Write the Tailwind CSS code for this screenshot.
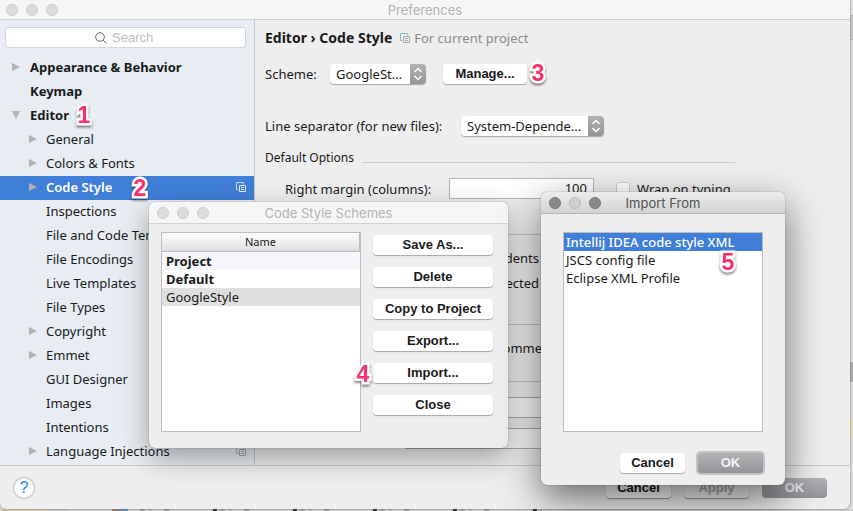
<!DOCTYPE html>
<html lang="en">
<head>
<meta charset="utf-8">
<title>Preferences</title>
<script src="https://cdn.jsdelivr.net/npm/@tailwindcss/browser@4"></script>
</head>
<body class="relative flex h-screen flex-col overflow-hidden bg-[#e2e2e2] font-['Noto_Sans',sans-serif] text-[13px] leading-5 text-[#1a1a1a]">
<svg class="hidden">
  <symbol id="copy" viewBox="0 0 10 10"><path d="M2.5 7.5h-2v-7h7v2" fill="none" stroke="var(--back,#8fb9cc)"/><path d="M3.500 3.500h6v6h-6zM5 5.500h3M5 7.500h3" fill="none" stroke="var(--front,#a3a7aa)"/></symbol>
  <symbol id="right" viewBox="0 0 8 10"><path d="M0 1v8l8-4z" fill="#b2b2b2"/></symbol>
  <symbol id="down" viewBox="0 0 10 8"><path d="M1 0h8L5 8z" fill="#b2b2b2"/></symbol>
  <symbol id="updown" viewBox="0 0 10 14"><path d="M1.500 5 5 1.500 8.500 5M1.500 9 5 12.500 8.500 9" fill="none" stroke="#fff" stroke-width="1.500"/></symbol>
</svg>

<!-- editor window behind the preferences -->
<div class="absolute inset-y-0 right-0 w-2 overflow-hidden bg-[#dedede]">
  <div class="h-4 border-b border-[#c0c0c0] bg-[#e4e4e4]"></div>
  <div class="h-6 border-b border-[#b5b5b5] bg-[#cacaca]"></div>
  <div class="mt-[322px] h-5 bg-[#b0b0b0]"></div>
  <div class="mt-9 h-5 bg-[#dedfb8]"></div>
</div>
<div class="absolute inset-x-0 bottom-0 flex h-[2px] bg-[#cfcfcf]">
  <div class="w-12 bg-[#cfcbb4]"></div><div class="w-5 bg-[#c5c5c5]"></div><div class="w-11"></div>
  <div class="w-2 bg-[#a08370]"></div><div class="w-2 bg-[#6a93b5]"></div>
  <div class="ml-3 w-[402px] bg-[repeating-linear-gradient(90deg,#aaa_0_5px,#cfcfcf_5px_9px,#b4b4b4_9px_12px,#cfcfcf_12px_24px,#aaa_24px_30px,#cfcfcf_30px_73px,#333_73px_77px,#cfcfcf_77px_80px)]"></div>
</div>

<main class="relative mr-[3px] mb-[2px] flex min-h-0 flex-1 flex-col overflow-hidden rounded-b-md bg-[#eee] shadow-[0_0_2px_rgba(0,0,0,.6)]">
  <header class="relative flex h-5 shrink-0 items-center justify-center border-b border-[#d2d2d2] bg-[#f6f6f6]">
    <div class="absolute left-[6px] flex gap-2"><i class="size-3 rounded-full border border-[#cdcdcd] bg-[#dcdcdc]"></i><i class="size-3 rounded-full border border-[#cdcdcd] bg-[#dcdcdc]"></i><i class="size-3 rounded-full border border-[#cdcdcd] bg-[#dcdcdc]"></i></div>
    <h1 class="font-[Inter,sans-serif] text-[#b3b3b3]">Preferences</h1>
  </header>

  <div class="flex min-h-0 flex-1">
    <aside class="flex w-[255px] shrink-0 flex-col border-r border-[#c4c6c8] bg-[#e7edf2]">
      <label class="mt-[7px] mr-2 mb-2 ml-[5px] flex h-[21px] items-center justify-center gap-[5px] rounded-[3px] border border-[#d3d7da] bg-white">
        <svg class="size-3" viewBox="0 0 12 12" fill="none" stroke="#666"><circle cx="5" cy="5" r="4.300"/><path d="m8 8 3.500 3.500"/></svg>
        <input type="text" aria-label="Search" placeholder="Search" class="w-[44px] font-['Liberation_Sans',sans-serif] text-[13px] outline-none placeholder:text-[#bdbdbd]">
      </label>
      <ul class="[&>li]:flex [&>li]:h-6 [&>li]:items-center [&>li]:pr-2 [&>li]:pb-[2px]">
        <li class="pl-3 font-bold"><svg class="mr-[10px] h-[10px] w-2"><use href="#right"/></svg>Appearance &amp; Behavior</li>
        <li class="pl-[30px] font-bold">Keymap</li>
        <li class="pl-[11px] font-bold"><svg class="mr-[9px] h-2 w-[10px]"><use href="#down"/></svg>Editor</li>
        <li class="pl-[29px]"><svg class="mr-[9px] h-[10px] w-2"><use href="#right"/></svg>General</li>
        <li class="pl-[29px]"><svg class="mr-[9px] h-[10px] w-2"><use href="#right"/></svg>Colors &amp; Fonts</li>
        <li class="bg-[#3f7ed9] pl-[29px] font-semibold text-white"><svg class="mr-[9px] h-[10px] w-2"><use href="#right"/></svg>Code Style<svg class="ml-auto size-[10px] [--back:#c4d8f4] [--front:#e0eafa]"><use href="#copy"/></svg></li>
        <li class="pl-[46px]">Inspections</li>
        <li class="pl-[46px]">File and Code Templates</li>
        <li class="pl-[46px]">File Encodings</li>
        <li class="pl-[46px]">Live Templates</li>
        <li class="pl-[46px]">File Types</li>
        <li class="pl-[29px]"><svg class="mr-[9px] h-[10px] w-2"><use href="#right"/></svg>Copyright</li>
        <li class="pl-[29px]"><svg class="mr-[9px] h-[10px] w-2"><use href="#right"/></svg>Emmet</li>
        <li class="pl-[46px]">GUI Designer</li>
        <li class="pl-[46px]">Images</li>
        <li class="pl-[46px]">Intentions</li>
        <li class="pl-[29px]"><svg class="mr-[9px] h-[10px] w-2"><use href="#right"/></svg>Language Injections<svg class="ml-auto size-[10px]"><use href="#copy"/></svg></li>
      </ul>
    </aside>

    <section class="min-w-0 flex-1 overflow-hidden pt-2 pr-[115px] pl-[10px]">
      <div class="flex items-center"><h2 class="text-sm leading-5 font-bold">Editor › Code Style</h2><svg class="mr-1 ml-2 size-[10px]"><use href="#copy"/></svg><span class="text-[#8c8c8c]">For current project</span></div>
      <div class="mt-4 flex items-center">
        <label for="scheme" class="w-[65px]">Scheme:</label>
        <div class="relative flex w-24 overflow-hidden rounded-[4px] bg-white shadow-[0_1px_1px_rgba(0,0,0,.3)]">
          <select id="scheme" class="h-5 w-full appearance-none pl-[6px]"><option>GoogleSt...</option></select>
          <span class="pointer-events-none absolute inset-y-0 right-0 flex w-4 items-center justify-center bg-linear-to-b from-[#b3b2b7] to-[#949398]"><svg class="h-[14px] w-[10px]"><use href="#updown"/></svg></span>
        </div>
        <button class="ml-[17px] h-5 w-[84px] rounded-[4px] bg-white font-['Liberation_Sans',sans-serif] font-bold shadow-[0_1px_1px_rgba(0,0,0,.3)]">Manage...</button>
      </div>
      <div class="mt-8 flex items-center">
        <label for="sep" class="w-[196px]">Line separator (for new files):</label>
        <div class="relative flex w-[143px] overflow-hidden rounded-[4px] bg-white shadow-[0_1px_1px_rgba(0,0,0,.3)]">
          <select id="sep" class="h-5 w-full appearance-none pl-[6px]"><option>System-Depende...</option></select>
          <span class="pointer-events-none absolute inset-y-0 right-0 flex w-4 items-center justify-center bg-linear-to-b from-[#b3b2b7] to-[#949398]"><svg class="h-[14px] w-[10px]"><use href="#updown"/></svg></span>
        </div>
      </div>
      <div class="mt-3 flex items-center gap-2 text-[12px]"><h3>Default Options</h3><div class="mt-2 h-px flex-1 bg-[#cdcdcd]"></div></div>
      <div class="mt-[10px] flex items-center pl-5">
        <label for="margin" class="w-[164px]">Right margin (columns):</label>
        <input id="margin" value="100" class="h-[21px] w-[145px] border border-[#b4b4b4] bg-white pr-[6px] pb-[2px] text-right outline-none">
        <input id="wrap" type="checkbox" class="ml-[22px] size-[14px] appearance-none rounded-[3px] border border-[#d0d0d0] bg-white"><label for="wrap" class="ml-[7px]">Wrap on typing</label>
      </div>
      <div class="mt-[35px] border border-[#c4c4c4] pt-[13px] pr-[195px] text-right whitespace-nowrap">
        <p class="mb-[5px]">Detect and use existing file indents</p><p class="mb-[31px]">Show notifications about detected</p>
      </div>
      <div class="h-[57px] border-x border-b border-[#c4c4c4] pt-[13px] pr-[173px] text-right whitespace-nowrap">Enable formatter markers in comments</div>
      <input aria-label="Formatter off marker" class="mt-[15px] ml-[140px] block h-[21px] w-[320px] border border-[#a8a8a8] bg-[#f8f8f8]">
      <input aria-label="Formatter on marker" class="mt-[10px] ml-[140px] block h-[21px] w-[320px] border border-[#a8a8a8] bg-[#f8f8f8]">
    </section>
  </div>

  <footer class="flex h-[44px] shrink-0 items-center gap-[13px] border-t border-[#c9c9c9] pr-[23px] pl-[14px] font-['Liberation_Sans',sans-serif]">
    <button aria-label="Help" class="mr-auto size-5 rounded-full bg-white text-base leading-5 text-[#0a84ff] shadow-[0_0_2px_rgba(0,0,0,.6)]">?</button>
    <button class="h-5 w-[65px] rounded-[4px] bg-white font-bold shadow-[0_1px_1px_rgba(0,0,0,.4)]">Cancel</button>
    <button class="h-5 w-[65px] rounded-[4px] bg-[#f4f4f4] font-bold text-[#aaa] shadow-[0_1px_1px_rgba(0,0,0,.4)]">Apply</button>
    <button class="h-5 w-[65px] rounded-[4px] bg-linear-to-b from-[#b3b2b7] to-[#949398] font-bold text-[#eee]">OK</button>
  </footer>
</main>

<!-- scheme manager dialog -->
<section role="dialog" aria-labelledby="schemes-title" class="absolute top-[202px] left-[149px] w-[359px] rounded-md bg-[#eee] shadow-[0_0_1px_rgba(0,0,0,.6),0_10px_28px_rgba(0,0,0,.34)]">
  <header class="relative flex h-[22px] items-center justify-center rounded-t-md border-b border-[#d2d2d2] bg-[#f6f6f6]">
    <div class="absolute left-2 flex gap-2"><i class="size-3 rounded-full border border-[#cdcdcd] bg-[#dcdcdc]"></i><i class="size-3 rounded-full border border-[#cdcdcd] bg-[#dcdcdc]"></i><i class="size-3 rounded-full border border-[#cdcdcd] bg-[#dcdcdc]"></i></div>
    <h2 id="schemes-title" class="font-[Inter,sans-serif] text-[#b3b3b3]">Code Style Schemes</h2>
  </header>
  <div class="flex gap-3 px-3 pt-2 pb-4">
    <div class="h-[200px] w-[200px] border border-[#bdbdbd] bg-white">
      <table class="w-full border-collapse text-left leading-[18px]">
        <thead><tr><th class="h-[18px] border-r border-b border-[#bdbdbd] bg-linear-to-b from-white to-[#dedede] p-0 text-center text-[11px] font-normal">Name</th></tr></thead>
        <tbody class="[&_td]:h-[18px] [&_td]:px-1 [&_td]:py-0">
          <tr class="bg-[#f4f6fc] font-bold"><td>Project</td></tr>
          <tr class="font-bold"><td>Default</td></tr>
          <tr class="bg-[#dfdfdf]"><td>GoogleStyle</td></tr>
        </tbody>
      </table>
    </div>
    <div class="flex w-[120px] flex-col gap-3 pt-[3px] font-['Liberation_Sans',sans-serif] font-bold [&>button]:h-5 [&>button]:rounded-[4px] [&>button]:bg-white [&>button]:shadow-[0_1px_1px_rgba(0,0,0,.3)]">
      <button>Save As...</button><button>Delete</button><button>Copy to Project</button><button>Export...</button><button>Import...</button><button>Close</button>
    </div>
  </div>
</section>

<!-- import source dialog -->
<section role="dialog" aria-labelledby="import-title" class="absolute top-[192px] left-[541px] w-[244px] rounded-md bg-[#eee] shadow-[0_0_1px_rgba(0,0,0,.7),0_14px_38px_rgba(0,0,0,.56)]">
  <header class="relative flex h-[22px] items-center justify-center rounded-t-md border-b border-[#b6b6b6] bg-linear-to-b from-[#ececec] to-[#d3d3d3]">
    <div class="absolute left-2 flex gap-2"><i class="size-3 rounded-full border border-[#77767b] bg-[#8a898e]"></i><i class="size-3 rounded-full border border-[#b9b9b9] bg-[#cfcfcf]"></i><i class="size-3 rounded-full border border-[#77767b] bg-[#8a898e]"></i></div>
    <h2 id="import-title" class="font-[Inter,sans-serif] text-[#505050]">Import From</h2>
  </header>
  <div class="px-[22px] pt-[18px] pb-3">
    <ul class="h-[200px] border border-[#bdbdbd] bg-white leading-[18px] [&>li]:pl-[2px]">
      <li class="bg-[#3f7ed9] font-medium text-white">Intellij IDEA code style XML</li><li>JSCS config file</li><li>Eclipse XML Profile</li>
    </ul>
    <div class="mt-[21px] flex justify-end gap-[13px] font-['Liberation_Sans',sans-serif] font-bold">
      <button class="h-5 w-[65px] rounded-[4px] bg-white shadow-[0_1px_1px_rgba(0,0,0,.3)]">Cancel</button>
      <button class="h-5 w-[65px] rounded-[3px] bg-linear-to-b from-[#b3b2b7] to-[#949398] text-[#f4f4f4] ring-2 ring-[#c4c4c8]">OK</button>
    </div>
  </div>
</section>

<!-- step markers -->
<div class="pointer-events-none absolute inset-0 font-['Liberation_Sans',sans-serif] text-[23px] leading-6 font-bold text-[#ff2d6b] drop-shadow-[0_2px_1px_rgba(0,0,0,.45)] [-webkit-text-stroke:5px_white] [paint-order:stroke_fill] [&>b]:absolute [&>b]:w-4 [&>b]:text-center">
  <b class="top-[103px] left-[76px]">1</b><b class="top-[176px] left-[132px]">2</b><b class="top-[61px] left-[530px]">3</b><b class="top-[362px] left-[355px]">4</b><b class="top-[250px] left-[720px]">5</b>
</div>
</body>
</html>
